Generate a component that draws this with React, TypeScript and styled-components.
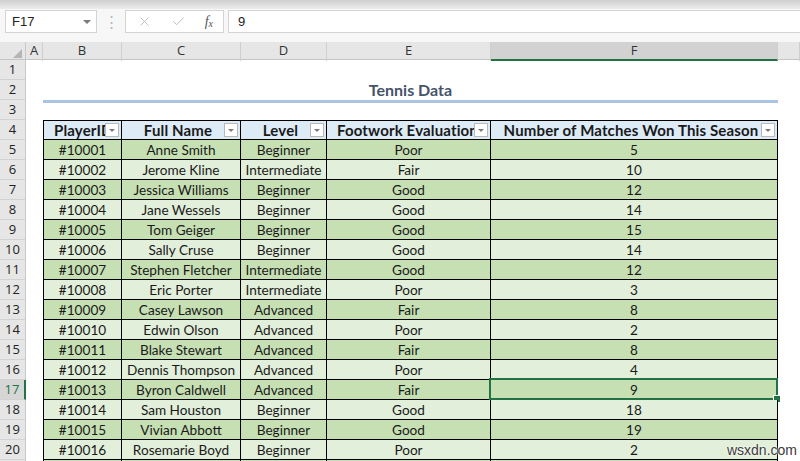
import styled, { createGlobalStyle, css } from "styled-components";
import { X, Check } from "lucide-react";

type Player = {
    id: string,
    name: string,
    level: string,
    footwork: string,
    won: number
}

const players: Player[] = [
    {id: "#10001", name: "Anne Smith", level: "Beginner", footwork: "Poor", won: 5},
    {id: "#10002", name: "Jerome Kline", level: "Intermediate", footwork: "Fair", won: 10},
    {id: "#10003", name: "Jessica Williams", level: "Beginner", footwork: "Good", won: 12},
    {id: "#10004", name: "Jane Wessels", level: "Beginner", footwork: "Good", won: 14},
    {id: "#10005", name: "Tom Geiger", level: "Beginner", footwork: "Good", won: 15},
    {id: "#10006", name: "Sally Cruse", level: "Beginner", footwork: "Good", won: 14},
    {id: "#10007", name: "Stephen Fletcher", level: "Intermediate", footwork: "Good", won: 12},
    {id: "#10008", name: "Eric Porter", level: "Intermediate", footwork: "Poor", won: 3},
    {id: "#10009", name: "Casey Lawson", level: "Advanced", footwork: "Fair", won: 8},
    {id: "#10010", name: "Edwin Olson", level: "Advanced", footwork: "Poor", won: 2},
    {id: "#10011", name: "Blake Stewart", level: "Advanced", footwork: "Fair", won: 8},
    {id: "#10012", name: "Dennis Thompson", level: "Advanced", footwork: "Poor", won: 4},
    {id: "#10013", name: "Byron Caldwell", level: "Advanced", footwork: "Fair", won: 9},
    {id: "#10014", name: "Sam Houston", level: "Beginner", footwork: "Good", won: 18},
    {id: "#10015", name: "Vivian Abbott", level: "Beginner", footwork: "Good", won: 19},
    {id: "#10016", name: "Rosemarie Boyd", level: "Beginner", footwork: "Poor", won: 2},
];

const headers = ["PlayerID", "Full Name", "Level", "Footwork Evaluation", "Number of Matches Won This Season"];
const columns = ["A", "B", "C", "D", "E", "F"];

const SELECTED_ROW = 17;
const SELECTED_COL = "F";
const FIRST_DATA_ROW = 5;

const GlobalStyle = createGlobalStyle`
  body {
    margin: 0;
    background: #fff;
    overflow: hidden;
  }
`;

const GRID = "26px 17px 79px 119px 86px 164px 287px 1fr";

function App() {
    return (
        <Window>
            <GlobalStyle/>
            <RibbonEdge/>
            <FormulaBar>
                <NameBox>
                    <span>F17</span>
                    <Caret/>
                </NameBox>
                <Grip>⋮</Grip>
                <FormulaButtons>
                    <X size={15} strokeWidth={1.4}/>
                    <Check size={15} strokeWidth={1.4}/>
                    <Fx>f<sub>x</sub></Fx>
                </FormulaButtons>
                <FormulaInput>9</FormulaInput>
            </FormulaBar>

            <Sheet>
                <ColumnHeaders>
                    <Corner><CornerTriangle/></Corner>
                    {columns.map(c => (
                        <ColHead key={c} $selected={c === SELECTED_COL}>{c}</ColHead>
                    ))}
                    <ColHead/>
                </ColumnHeaders>

                <Row>
                    <RowHead>1</RowHead>
                </Row>
                <Row>
                    <RowHead>2</RowHead>
                    <Blank/>
                    <Title>Tennis Data</Title>
                </Row>
                <Row>
                    <RowHead>3</RowHead>
                </Row>
                <Row>
                    <RowHead>4</RowHead>
                    <Blank/>
                    {headers.map((h, i) => (
                        <HeadCell key={h} $first={i === 0}>
                            <HeadLabel>{h}</HeadLabel>
                            <FilterButton/>
                        </HeadCell>
                    ))}
                </Row>

                {players.map((p, i) => {
                    const row = FIRST_DATA_ROW + i;
                    const dark = row % 2 === 1;
                    const selected = row === SELECTED_ROW;
                    return (
                        <Row key={p.id}>
                            <RowHead $selected={selected}>{row}</RowHead>
                            <Blank/>
                            <DataCell $dark={dark} $first>{p.id}</DataCell>
                            <DataCell $dark={dark}>{p.name}</DataCell>
                            <DataCell $dark={dark}>{p.level}</DataCell>
                            <DataCell $dark={dark}>{p.footwork}</DataCell>
                            <DataCell $dark={dark}>
                                {p.won}
                                {selected && <Selection><FillHandle/></Selection>}
                            </DataCell>
                        </Row>
                    );
                })}

                {/* next row, only its top edge fits in the window */}
                <Row>
                    <RowHead/>
                    <Blank/>
                    <DataCell $dark $first/>
                    <DataCell $dark/>
                    <DataCell $dark/>
                    <DataCell $dark/>
                    <DataCell $dark/>
                </Row>
            </Sheet>

            <Watermark>wsxdn.com</Watermark>
        </Window>
    );
}

const Window = styled.div`
  position: relative;
  width: 800px;
  height: 461px;
  overflow: hidden;
  background: #fff;
`;

const RibbonEdge = styled.div`
  height: 9px;
  background: linear-gradient(#cfcfcf, #e4e4e4 70%, #ececec);
`;

const FormulaBar = styled.div`
  display: flex;
  align-items: flex-start;
  height: 33px;
  box-sizing: border-box;
  padding: 1px 0 0 5px;
  background: #f7f7f7;
  font-family: "Liberation Sans", Arial, sans-serif;
  font-size: 13px;
  color: #222;
`;

const Box = styled.div`
  height: 23px;
  box-sizing: border-box;
  background: #fff;
  border: 1px solid #d4d4d4;
  display: flex;
  align-items: center;
`;

const NameBox = styled(Box)`
  width: 92px;
  padding: 0 0 0 6px;
  justify-content: space-between;
`;

const Caret = styled.div`
  width: 0;
  height: 0;
  margin-right: 5px;
  border-left: 4px solid transparent;
  border-right: 4px solid transparent;
  border-top: 4px solid #7a7a7a;
`;

const Grip = styled.div`
  width: 28px;
  height: 23px;
  line-height: 23px;
  text-align: center;
  color: #b4b4b4;
  font-size: 15px;
`;

const FormulaButtons = styled(Box)`
  width: 99px;
  padding: 0 10px 0 11px;
  justify-content: space-between;
  color: #b8b8b8;
`;

const Fx = styled.span`
  font-family: "Liberation Serif", serif;
  font-style: italic;
  font-size: 14px;
  color: #555;

  sub {
    font-size: 10px;
    vertical-align: -1px;
  }
`;

const FormulaInput = styled(Box)`
  flex: 1;
  margin-left: 4px;
  padding-left: 9px;
  border-right: none;
`;

const Sheet = styled.div`
  font-family: Lato, "Noto Sans", sans-serif;
  font-size: 13.6px;
  color: #1a1a1a;
`;

const ColumnHeaders = styled.div`
  display: grid;
  grid-template-columns: ${GRID};
  height: 17px;
  background: #e6e6e6;
  border-bottom: 1px solid #c4c4c4;
`;

const Corner = styled.div`
  display: flex;
  align-items: flex-end;
  justify-content: flex-end;
  padding: 0 3px 3px 0;
  border-right: 1px solid #c8c8c8;
`;

const CornerTriangle = styled.div`
  width: 0;
  height: 0;
  border-left: 9px solid transparent;
  border-bottom: 9px solid #b5b5b5;
`;

const ColHead = styled.div<{ $selected?: boolean }>`
  box-sizing: border-box;
  border-right: 1px solid #cfcfcf;
  text-align: center;
  font-family: "Open Sans", "Liberation Sans", sans-serif;
  font-size: 13px;
  line-height: 17px;
  color: #333;
  ${p => p.$selected && css`
    background: #d2d2d2;
    border-bottom: 2px solid #217346;
  `}
`;

const Row = styled.div`
  display: grid;
  grid-template-columns: ${GRID};
  grid-template-rows: 20px;
  height: 20px;
`;

const RowHead = styled.div<{ $selected?: boolean }>`
  box-sizing: border-box;
  background: #e6e6e6;
  border-right: 1px solid #c8c8c8;
  border-bottom: 1px solid #d2d2d2;
  text-align: center;
  font-family: "Open Sans", "Liberation Sans", sans-serif;
  font-size: 13px;
  line-height: 19px;
  color: #222;
  ${p => p.$selected && css`
    background: #d6d6d6;
    color: #217346;
    border-right: 2px solid #217346;
  `}
`;

const Blank = styled.div``;

const Title = styled.div`
  grid-column: 3 / 8;
  margin-bottom: -3px;
  border-bottom: 3px solid #a9c4e2;
  text-align: center;
  font-weight: 700;
  font-size: 16px;
  line-height: 19px;
  color: #44546a;
`;

const tableCell = css<{ $first?: boolean }>`
  box-sizing: border-box;
  border-right: 1px solid #000;
  border-bottom: 1px solid #000;
  ${p => p.$first && css`border-left: 1px solid #000;`}
`;

const HeadCell = styled.div<{ $first?: boolean }>`
  ${tableCell};
  position: relative;
  overflow: hidden;
  border-top: 1px solid #000;
  background: #ddebf7;
  font-weight: 700;
  font-size: 15px;
  letter-spacing: 0.15px;
`;

const HeadLabel = styled.div`
  padding: 0 16px 0 10px;
  line-height: 18px;
  text-align: center;
  white-space: nowrap;
  overflow: hidden;
`;

const FilterButton = styled.div`
  position: absolute;
  top: 2px;
  right: 2px;
  width: 14px;
  height: 14px;
  box-sizing: border-box;
  background: #fff;
  border: 1px solid #b9b9b9;

  &::after {
    content: "";
    position: absolute;
    left: 3px;
    top: 5px;
    border-left: 3px solid transparent;
    border-right: 3px solid transparent;
    border-top: 3px solid #7d7d7d;
  }
`;

const DataCell = styled.div<{ $dark?: boolean, $first?: boolean }>`
  ${tableCell};
  position: relative;
  background: ${p => p.$dark ? "#c6e0b4" : "#e2efda"};
  text-align: center;
  line-height: 20px;
  white-space: nowrap;
`;

const Selection = styled.div`
  position: absolute;
  top: -2px;
  left: -2px;
  right: -1px;
  bottom: -1px;
  border: 2px solid #217346;
  pointer-events: none;
`;

const FillHandle = styled.div`
  position: absolute;
  right: -5px;
  bottom: -5px;
  width: 6px;
  height: 6px;
  background: #217346;
  border: 1px solid #fff;
`;

const Watermark = styled.div`
  position: absolute;
  right: 3px;
  bottom: 3px;
  font-family: "Liberation Sans", Arial, sans-serif;
  font-size: 14px;
  color: #3a3a3a;
  text-shadow: 0 0 2px #fff, 0 0 2px #fff;
`;

export default App;
